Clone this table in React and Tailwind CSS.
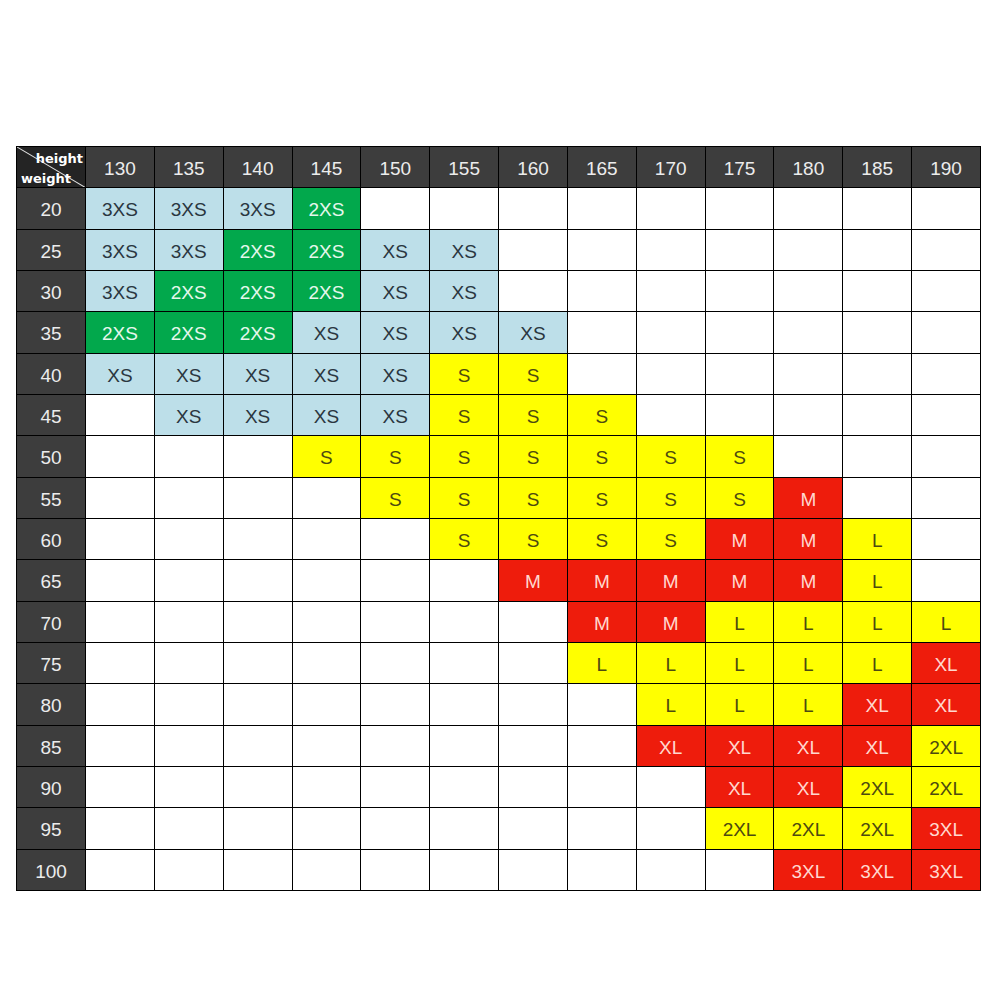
import React from "react";

const heights = [130, 135, 140, 145, 150, 155, 160, 165, 170, 175, 180, 185, 190];

// each row: weight, offset of first filled column, then the cells as "size:colour"
const rows = [
  [20, 0, ["3XS:b", "3XS:b", "3XS:b", "2XS:g"]],
  [25, 0, ["3XS:b", "3XS:b", "2XS:g", "2XS:g", "XS:b", "XS:b"]],
  [30, 0, ["3XS:b", "2XS:g", "2XS:g", "2XS:g", "XS:b", "XS:b"]],
  [35, 0, ["2XS:g", "2XS:g", "2XS:g", "XS:b", "XS:b", "XS:b", "XS:b"]],
  [40, 0, ["XS:b", "XS:b", "XS:b", "XS:b", "XS:b", "S:y", "S:y"]],
  [45, 1, ["XS:b", "XS:b", "XS:b", "XS:b", "S:y", "S:y", "S:y"]],
  [50, 3, ["S:y", "S:y", "S:y", "S:y", "S:y", "S:y", "S:y"]],
  [55, 4, ["S:y", "S:y", "S:y", "S:y", "S:y", "S:y", "M:r"]],
  [60, 5, ["S:y", "S:y", "S:y", "S:y", "M:r", "M:r", "L:y"]],
  [65, 6, ["M:r", "M:r", "M:r", "M:r", "M:r", "L:y"]],
  [70, 7, ["M:r", "M:r", "L:y", "L:y", "L:y", "L:y"]],
  [75, 7, ["L:y", "L:y", "L:y", "L:y", "L:y", "XL:r"]],
  [80, 8, ["L:y", "L:y", "L:y", "XL:r", "XL:r"]],
  [85, 8, ["XL:r", "XL:r", "XL:r", "XL:r", "2XL:y"]],
  [90, 9, ["XL:r", "XL:r", "2XL:y", "2XL:y"]],
  [95, 9, ["2XL:y", "2XL:y", "2XL:y", "3XL:r"]],
  [100, 10, ["3XL:r", "3XL:r", "3XL:r"]],
];

const colours = {
  b: "bg-[#bddfe9] text-[#2a3640]",
  g: "bg-[#02a84c] text-[#e6f7ec]",
  y: "bg-[#ffff00] text-[#4d4a10]",
  r: "bg-[#ee1c0c] text-[#ffd8cf]",
  w: "bg-white text-black",
};

const Cell = ({ value, colour }) => (
  <div className={`flex items-center justify-center pt-[4px] text-[19px] ${colours[colour]}`}>
    {value}
  </div>
);

const App = () => {
  return (
    <div className="w-[1001px] h-[1001px] bg-white pt-[146px] pl-[16px]" style={{ fontFamily: '"Liberation Sans", Arial, sans-serif' }}>
      <div className="grid grid-cols-[68px_repeat(13,1fr)] grid-rows-[repeat(18,1fr)] w-[965px] h-[745px] bg-black gap-px p-px">

        {/* corner cell */}
        <div className="relative bg-[#242424] overflow-hidden">
          <svg className="absolute inset-0" width="100%" height="100%" viewBox="0 0 68 40" preserveAspectRatio="none">
            <line x1="0" y1="0" x2="68" y2="40" stroke="#e0e0e0" strokeWidth="1" />
          </svg>
          <span className="absolute right-[2px] top-[2px] text-[13px] font-bold text-white" style={{ fontFamily: '"DejaVu Sans", sans-serif' }}>height</span>
          <span className="absolute left-[4px] -bottom-[1px] text-[13px] font-bold text-white" style={{ fontFamily: '"DejaVu Sans", sans-serif' }}>weight</span>
        </div>

        {heights.map((h) => (
          <div key={h} className="flex items-center justify-center pt-[4px] bg-[#3d3d3d] text-[#ececec] text-[19px]">
            {h}
          </div>
        ))}

        {rows.map(([weight, offset, cells]) => {
          const line = [];
          for (let i = 0; i < heights.length; i++) {
            const cell = cells[i - offset];
            if (i >= offset && cell) {
              const [value, colour] = cell.split(":");
              line.push(<Cell key={i} value={value} colour={colour} />);
            } else {
              line.push(<Cell key={i} value="" colour="w" />);
            }
          }
          return (
            <React.Fragment key={weight}>
              <div className="flex items-center justify-center pt-[4px] bg-[#3d3d3d] text-[#ececec] text-[19px]">
                {weight}
              </div>
              {line}
            </React.Fragment>
          );
        })}
      </div>
    </div>
  );
};

export default App;
